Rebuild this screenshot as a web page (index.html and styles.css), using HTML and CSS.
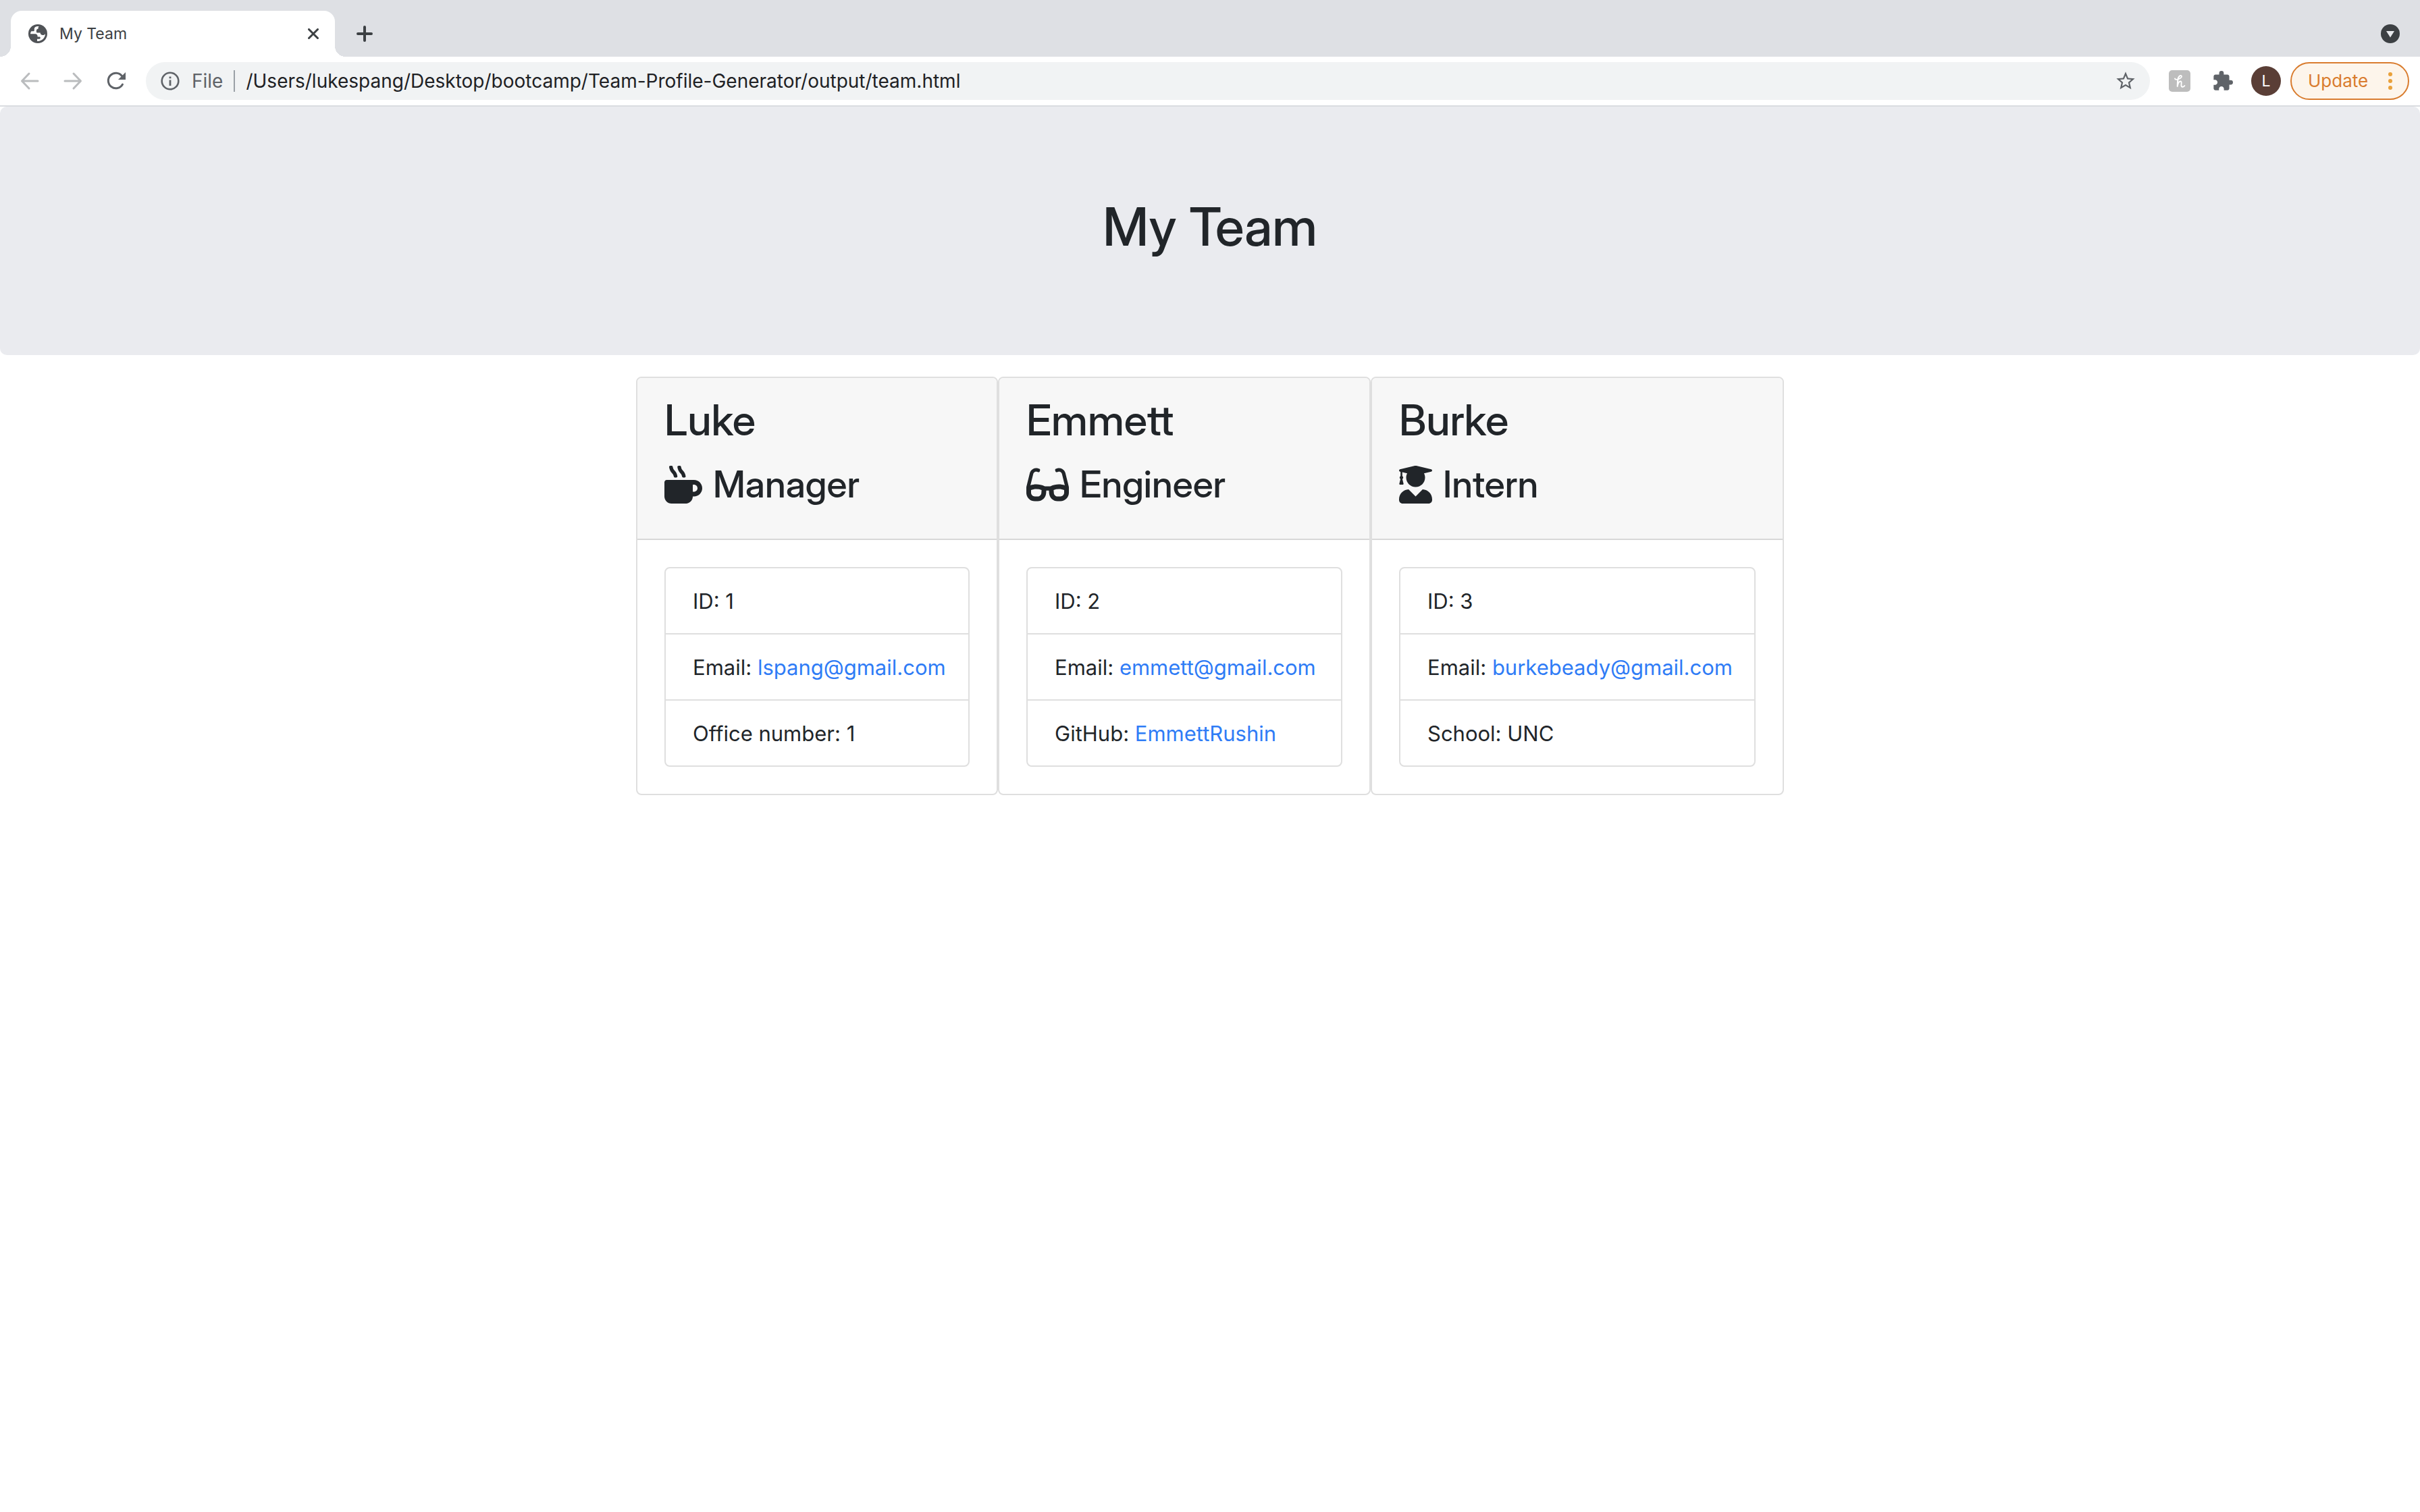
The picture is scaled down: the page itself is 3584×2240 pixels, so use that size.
FILE: index.html
```html
<!DOCTYPE html>
<html lang="en">
<head>
<meta charset="utf-8">
<meta name="viewport" content="width=device-width, initial-scale=1">
<title>My Team</title>
<link rel="stylesheet" href="styles.css">
</head>
<body>
<header class="browser">
  <div class="tabstrip">
    <div class="tab">
      <svg class="tab-icon" viewBox="2 2 20 20" aria-hidden="true"><circle cx="12" cy="12" r="10" fill="#505357"/><path fill="#fff" d="M12.400 4.200c-1.200 0-2.200.2-3.200.8-.6.4-.9 1-.9 1.800v1.600c0 .5-.5.9-1 .9H5.200C4.500 10.300 4.100 11.200 4.200 12.200h5.300c1.200 0 2.200 1 2.200 2.200v.8h2c.6 0 1 .4 1 1 0 .8-.7 1.400-1.500 1.400h-1.900v2.200c5 .3 8.500-3.400 8.600-7.800-.5 1-1.400 1.500-2.600 1.500-1.600 0-2.700-1-2.700-2.500h-2.900c-.7 0-1.200-.5-1.200-1.200V8.800c0-1.100.8-1.900 1.900-1.900v-.6c0-.8.300-1.500.9-1.900z"/></svg>
      <span class="tab-title">My Team</span>
      <button class="icon-button tab-close" type="button" aria-label="Close tab"><svg width="16" height="16" viewBox="0 0 16 16"><path d="M1.500 1.500l13 13M14.500 1.500l-13 13" stroke="#3c4043" stroke-width="3" stroke-linecap="round"/></svg></button>
    </div>
    <button class="icon-button new-tab" type="button" aria-label="New tab"><svg width="24" height="24" viewBox="0 0 24 24"><path d="M12 2v20M2 12h20" stroke="#3c4043" stroke-width="4" stroke-linecap="round"/></svg></button>
    <button class="icon-button tab-search" type="button" aria-label="Search tabs"><svg width="28" height="28" viewBox="0 0 28 28"><circle cx="14" cy="14" r="14" fill="#3c4043"/><path d="M8 10h12l-6 9.500z" fill="#e8eaed"/></svg></button>
  </div>
  <div class="toolbar">
    <button class="icon-button" type="button" aria-label="Back"><svg width="28" height="28" viewBox="0 0 28 28"><path d="M13 3L2.500 14 13 25M3 14h23" fill="none" stroke="#babcbe" stroke-width="3" stroke-linecap="round" stroke-linejoin="round"/></svg></button>
    <button class="icon-button" type="button" aria-label="Forward"><svg width="28" height="28" viewBox="0 0 28 28"><path d="M15 3l10.500 11L15 25M25 14H2" fill="none" stroke="#babcbe" stroke-width="3" stroke-linecap="round" stroke-linejoin="round"/></svg></button>
    <button class="icon-button" type="button" aria-label="Reload"><svg width="28" height="28" viewBox="0 0 28 28"><path d="M23.500 19A11.300 11.300 0 1 1 22.500 6.500" fill="none" stroke="#5f6368" stroke-width="3" stroke-linecap="round"/><path d="M28 1v11H17z" fill="#5f6368"/></svg></button>
    <div class="omnibox">
      <svg width="28" height="28" viewBox="0 0 28 28" aria-hidden="true"><circle cx="14" cy="14" r="12.300" fill="none" stroke="#5f6368" stroke-width="2.600"/><path d="M12.600 12.500h2.800V21h-2.800zM12.600 7.500h2.800v2.800h-2.800z" fill="#5f6368"/></svg>
      <label class="scheme" for="address">File</label>
      <input class="address" id="address" type="text" value="/Users/lukespang/Desktop/bootcamp/Team-Profile-Generator/output/team.html">
      <button class="icon-button" type="button" aria-label="Bookmark this page"><svg width="30" height="30" viewBox="1 1 22 22"><path fill="#5f6368" d="M22 9.240l-7.190-.62L12 2 9.190 8.630 2 9.240l5.460 4.730L5.820 21 12 17.270 18.180 21l-1.630-7.030L22 9.240zM12 15.400l-3.760 2.270 1-4.280-3.320-2.880 4.380-.38L12 6.100l1.710 4.040 4.380.38-3.320 2.880 1 4.280L12 15.400z"/></svg></button>
    </div>
    <button class="icon-button" type="button" aria-label="Honey"><svg width="32" height="32" viewBox="0 0 32 32"><rect width="32" height="32" rx="5" fill="#bdbdbd"/><path d="M9 12.500c.5 2.300 7 1.500 9.500-2 1.200-2-.2-3.100-1.800-2.400C13.500 9.500 12.800 14 12.700 24c.8-4.500 2.800-7.800 4.900-7.500 2.300.4.300 5 .9 6.900.6 1.900 3.300 1.700 4.900-.4" fill="none" stroke="#fff" stroke-width="1.900" stroke-linecap="round" stroke-linejoin="round"/></svg></button>
    <button class="icon-button" type="button" aria-label="Extensions"><svg width="30" height="30" viewBox="1 1 22 22"><path fill="#5f6368" d="M20.500 11H19V7c0-1.100-.9-2-2-2h-4V3.500a2.500 2.500 0 0 0-5 0V5H4c-1.100 0-1.990.9-1.990 2v3.800H3.500c1.490 0 2.700 1.210 2.700 2.700s-1.210 2.700-2.700 2.700H2V20c0 1.100.9 2 2 2h3.800v-1.500c0-1.490 1.210-2.700 2.700-2.700s2.700 1.210 2.700 2.700V22H17c1.100 0 2-.9 2-2v-4h1.500a2.500 2.500 0 0 0 0-5z"/></svg></button>
    <button class="icon-button" type="button" aria-label="Profile"><span class="avatar">L</span></button>
    <button class="update" type="button">Update<svg width="6" height="26" viewBox="0 0 6 26" aria-hidden="true"><g fill="#e9a13b"><circle cx="3" cy="3" r="3"/><circle cx="3" cy="13" r="3"/><circle cx="3" cy="23" r="3"/></g></svg></button>
  </div>
</header>

<div class="jumbotron"><h1>My Team</h1></div>

<main class="team">
  <section class="card">
    <div class="card-header">
      <h2>Luke</h2>
      <h3><svg width="56" height="56" viewBox="0 0 512 512" aria-hidden="true"><path fill="currentColor" d="M127.100 146.500c1.300 7.700 8 13.500 16 13.500h16.500c9.800 0 17.600-8.500 16.300-18-3.800-28.200-16.400-54.200-36.600-74.700-14.400-14.700-23.600-33.300-26.400-53.500C111.800 5.900 105 0 96.800 0H80.400C70.600 0 63 8.500 64.100 18c3.900 31.900 18 61.300 40.600 84.400 12 12.200 19.700 27.500 22.400 44.100zm112 0c1.300 7.700 8 13.500 16 13.500h16.500c9.800 0 17.600-8.500 16.300-18-3.800-28.200-16.400-54.200-36.600-74.700-14.400-14.700-23.600-33.300-26.400-53.500C223.800 5.900 217 0 208.800 0h-16.400c-9.800 0-17.500 8.500-16.300 18 3.900 31.900 18 61.300 40.600 84.400 12 12.200 19.700 27.500 22.400 44.100zM400 192H32c-17.700 0-32 14.300-32 32v192c0 53 43 96 96 96h192c53 0 96-43 96-96h16c61.800 0 112-50.200 112-112s-50.200-112-112-112zm0 160h-16v-96h16c26.500 0 48 21.500 48 48s-21.500 48-48 48z"/></svg>Manager</h3>
    </div>
    <div class="card-body">
      <ul class="list">
        <li>ID: 1</li>
        <li>Email: <a href="mailto:lspang@gmail.com">lspang@gmail.com</a></li>
        <li>Office number: 1</li>
      </ul>
    </div>
  </section>
  <section class="card">
    <div class="card-header">
      <h2>Emmett</h2>
      <h3><svg width="63" height="56" viewBox="0 0 576 512" aria-hidden="true"><path fill="currentColor" d="M574.100 280.370L528.750 98.660c-5.910-23.700-21.590-44.050-43-55.810-21.440-11.730-46.970-14.110-70.190-6.330l-15.250 5.080c-8.390 2.790-12.920 11.860-10.120 20.240l5.060 15.180c2.790 8.380 11.850 12.910 20.230 10.120l13.180-4.390c10.870-3.620 23-3.570 33.160 1.730 10.290 5.370 17.570 14.560 20.370 25.820l38.460 153.820c-22.190-6.810-49.790-12.460-81.200-12.460-34.770 0-73.980 7.020-114.850 26.740h-73.180c-40.870-19.740-80.080-26.750-114.860-26.750-31.420 0-59.020 5.650-81.210 12.460l38.460-153.830c2.790-11.250 10.090-20.450 20.380-25.810 10.160-5.300 22.280-5.350 33.150-1.730l13.170 4.390c8.380 2.790 17.440-1.740 20.230-10.120l5.060-15.180c2.800-8.380-1.730-17.450-10.120-20.240l-15.250-5.080c-23.220-7.780-48.750-5.410-70.190 6.330-21.410 11.770-37.090 32.110-43 55.810L1.900 280.370A64.218 64.218 0 0 0 0 295.860v70.250C0 429.010 51.580 480 115.200 480h37.120c60.280 0 110.370-45.940 114.880-105.370l2.930-38.630h35.750l2.930 38.630C313.310 434.060 363.400 480 423.680 480h37.120c63.620 0 115.200-50.990 115.200-113.880v-70.250c0-5.230-.64-10.430-1.900-15.500zm-370.720 89.420c-1.970 25.910-24.400 46.210-51.060 46.210H115.200C86.970 416 64 393.620 64 366.110v-37.540c18.120-6.490 43.420-12.920 72.580-12.920 23.860 0 47.260 4.330 69.930 12.920l-3.130 41.220zM512 366.120c0 27.510-22.970 49.880-51.200 49.880h-37.120c-26.670 0-49.100-20.300-51.060-46.210l-3.130-41.220c22.670-8.590 46.080-12.920 69.950-12.920 29.120 0 54.430 6.440 72.550 12.930v37.540z"/></svg>Engineer</h3>
    </div>
    <div class="card-body">
      <ul class="list">
        <li>ID: 2</li>
        <li>Email: <a href="mailto:emmett@gmail.com">emmett@gmail.com</a></li>
        <li>GitHub: <a href="https://github.com/EmmettRushin">EmmettRushin</a></li>
      </ul>
    </div>
  </section>
  <section class="card">
    <div class="card-header">
      <h2>Burke</h2>
      <h3><svg width="49" height="56" viewBox="0 0 448 512" aria-hidden="true"><path fill="currentColor" d="M319.400 320.600L224 416l-95.400-95.400C57.100 323.700 0 382.200 0 454.400v9.600c0 26.500 21.500 48 48 48h352c26.500 0 48-21.500 48-48v-9.600c0-72.200-57.100-130.700-128.600-133.800zM13.600 79.800l6.400 1.500v58.400c-7 4.200-12 11.500-12 20.300 0 8.400 4.600 15.400 11.100 19.700L3.500 242c-1.700 6.900 2.100 14 7.600 14h41.800c5.500 0 9.300-7.100 7.600-14l-15.600-62.300C51.400 175.400 56 168.400 56 160c0-8.800-5-16.100-12-20.300V87.100l66 15.900c-8.600 17.200-14 36.400-14 57 0 70.700 57.300 128 128 128s128-57.300 128-128c0-20.600-5.300-39.800-14-57l96.300-23.200c18.200-4.400 18.200-27.100 0-31.500l-190.400-46c-13-3.100-26.700-3.100-39.700 0L13.600 48.200c-18.100 4.400-18.100 27.100 0 31.600z"/></svg>Intern</h3>
    </div>
    <div class="card-body">
      <ul class="list">
        <li>ID: 3</li>
        <li>Email: <a href="mailto:burkebeady@gmail.com">burkebeady@gmail.com</a></li>
        <li>School: UNC</li>
      </ul>
    </div>
  </section>
</main>
</body>
</html>
```
FILE: styles.css
```css
* { box-sizing: border-box; }

body {
  margin: 0;
  background: #fff;
  color: #212529;
  font: 400 31px/48px Inter, "Liberation Sans", sans-serif;
}

h1, h2, h3 {
  margin: 0;
  font-family: "Inter Display", Inter, sans-serif;
  font-weight: 500;
}

a { color: #2f7cf6; text-decoration: none; }

button {
  padding: 0;
  border: 0;
  background: none;
  font: inherit;
}

svg { display: block; flex: none; }

/* Browser chrome */
.browser { border-bottom: 2px solid #dadce0; }

.tabstrip {
  display: flex;
  align-items: center;
  height: 84px;
  padding: 16px 16px 0;
  background: #dee0e4;
}

.tab {
  position: relative;
  display: flex;
  align-items: center;
  width: 480px;
  height: 68px;
  padding: 0 4px 0 26px;
  border-radius: 16px 16px 0 0;
  background: #fff;
}

.tab::before,
.tab::after {
  content: "";
  position: absolute;
  bottom: 0;
  width: 16px;
  height: 16px;
}

.tab::before {
  right: 100%;
  background: radial-gradient(circle at 0 0, transparent 16px, #fff 16px);
}

.tab::after {
  left: 100%;
  background: radial-gradient(circle at 100% 0, transparent 16px, #fff 16px);
}

.tab-icon { width: 28px; height: 28px; }

.tab-title {
  flex: 1;
  margin-left: 18px;
  color: #3c4043;
  font-size: 23px;
}

.icon-button {
  display: flex;
  flex: none;
  align-items: center;
  justify-content: center;
  width: 56px;
  height: 56px;
}

.new-tab { margin-left: 16px; }
.tab-search { margin-left: auto; }

.toolbar {
  display: flex;
  align-items: center;
  gap: 8px;
  height: 72px;
  padding: 0 16px;
}

.omnibox {
  display: flex;
  flex: 1;
  align-items: center;
  height: 56px;
  margin: 0 8px;
  padding: 0 8px 0 22px;
  border-radius: 28px;
  background: #f1f3f4;
  font-size: 28px;
}

.scheme {
  margin-left: 18px;
  padding-right: 16px;
  border-right: 2px solid #9aa0a6;
  color: #5f6368;
  line-height: 32px;
}

.address {
  flex: 1;
  min-width: 0;
  padding: 0 0 0 16px;
  border: 0;
  outline: 0;
  background: none;
  color: #202124;
  font: inherit;
}

.avatar {
  width: 44px;
  height: 44px;
  border-radius: 50%;
  background: #5a3e36;
  color: #fff;
  font-size: 23px;
  line-height: 44px;
  text-align: center;
}

.update {
  display: flex;
  align-items: center;
  justify-content: space-between;
  width: 176px;
  height: 56px;
  padding: 0 23px 0 24px;
  border: 2px solid #d97c2e;
  border-radius: 28px;
  background: #fdf5eb;
  color: #d97c2e;
  font-size: 26px;
}

/* Page */
.jumbotron {
  margin-bottom: 32px;
  padding: 130px 64px 142px;
  border-radius: 10px;
  background: #eaebef;
  text-align: center;
}

.jumbotron h1 { font-size: 78px; line-height: 96px; }

.team {
  display: grid;
  grid-template-columns: 536px 552px 612px;
  justify-content: center;
}

.card {
  border: 2px solid #dfdfdf;
  border-radius: 8px;
}

.card-header {
  padding: 24px 40px 40px;
  border-bottom: 2px solid #d8d8d8;
  border-radius: 6px 6px 0 0;
  background: #f7f7f7;
}

.card-header h2 {
  margin-bottom: 16px;
  font-size: 63px;
  line-height: 77px;
}

.card-header h3 {
  display: flex;
  align-items: center;
  gap: 16px;
  font-size: 55px;
  line-height: 81px;
}

.card-body { padding: 40px; }

.list {
  margin: 0;
  padding: 0;
  border: 2px solid #dfdfdf;
  border-radius: 8px;
  list-style: none;
}

.list li {
  padding: 25px 24px 23px 40px;
  white-space: nowrap;
}

.list li + li { border-top: 2px solid #dfdfdf; }
```
